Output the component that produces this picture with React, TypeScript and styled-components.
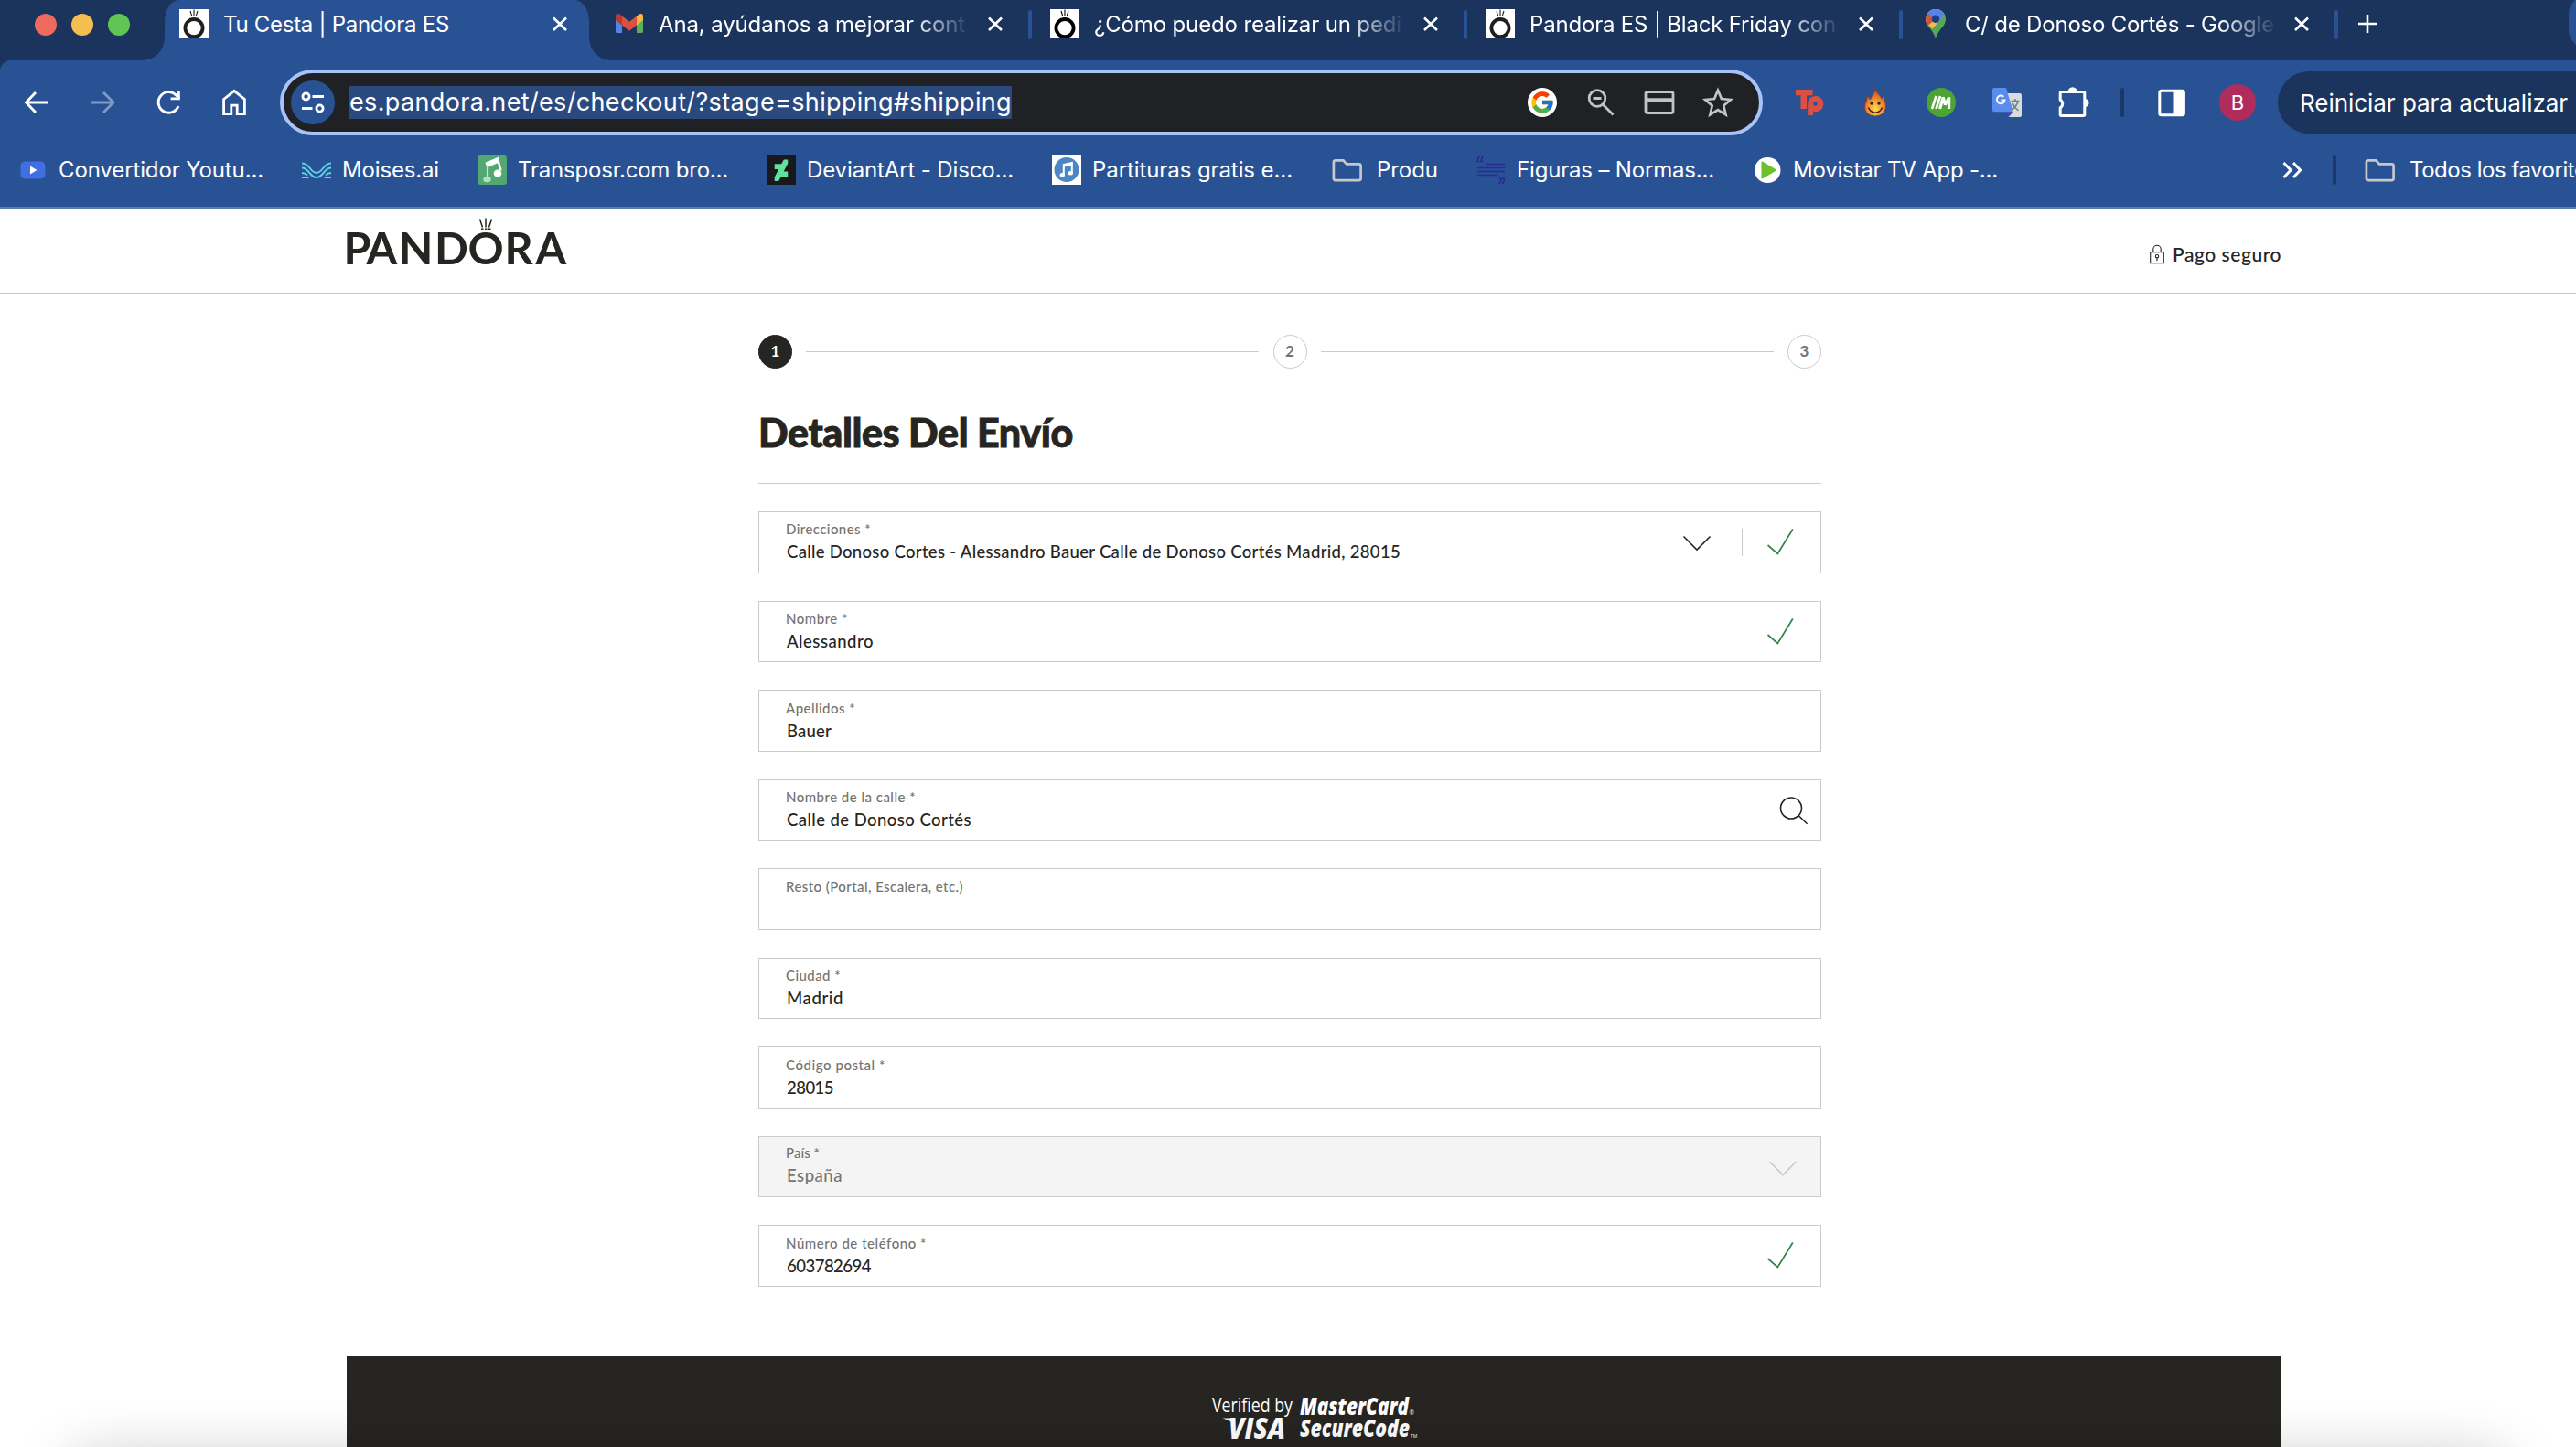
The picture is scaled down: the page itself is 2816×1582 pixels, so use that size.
import React, { useLayoutEffect, useRef, useState } from "react";
import styled, { createGlobalStyle } from "styled-components";
import { FcGoogle } from "react-icons/fc";

const color = {
  strip: "#1a345e",
  bar: "#295295",
  ink: "#262521",
  muted: "#74736f",
  line: "#cbcbcb",
  green: "#2f8547",
};

const ui = `Inter, "Liberation Sans", sans-serif`;
const brand = `Lato, "Open Sans", sans-serif`;

const GlobalStyle = createGlobalStyle`
  * { box-sizing: border-box; }
  html, body { margin: 0; padding: 0; background: #fff; }
  body { overflow: hidden; }
  svg { display: block; flex: none; overflow: visible; }
`;

/* ---------- text that keeps a fixed measure ---------- */

const Measure = styled.span<{ $w: number }>`
  display: block;
  flex: none;
  width: ${(p) => p.$w}px;
  white-space: pre;
`;

function Fit({ w, children }: { w: number; children: string }) {
  const ref = useRef<HTMLSpanElement>(null);
  const [spacing, setSpacing] = useState(0);
  useLayoutEffect(() => {
    const el = ref.current;
    if (!el) return;
    el.style.letterSpacing = "0px";
    const natural = el.getBoundingClientRect().width;
    const next = (w - natural) / children.length;
    el.style.letterSpacing = `${next}px`;
    setSpacing(next);
  }, [w, children]);
  return (
    <Measure $w={w}>
      <span ref={ref} style={{ letterSpacing: spacing }}>
        {children}
      </span>
    </Measure>
  );
}

/* ---------- browser chrome ---------- */

const Screen = styled.div`
  position: relative;
  width: 2816px;
  height: 1582px;
  overflow: hidden;
  background: #fff;
  display: flex;
  flex-direction: column;
`;

const TabStrip = styled.div`
  display: flex;
  flex: none;
  height: 66px;
  background: ${color.strip};
  color: #fff;
  font: 400 24px/54px ${ui};
  overflow: hidden;
`;

const Lights = styled.div`
  display: flex;
  flex: none;
  gap: 16px;
  width: 180px;
  padding: 15px 0 0 38px;
`;

const Light = styled.i<{ $c: string }>`
  width: 24px;
  height: 24px;
  border-radius: 50%;
  background: ${(p) => p.$c};
`;

const ActiveTab = styled.div`
  position: relative;
  display: flex;
  flex: none;
  width: 464px;
  height: 66px;
  padding-left: 16px;
  background: ${color.bar};
  border-radius: 16px 16px 0 0 / 24px 24px 0 0;
  &::before,
  &::after {
    content: "";
    position: absolute;
    bottom: 0;
    width: 24px;
    height: 24px;
  }
  &::before {
    left: -24px;
    background: radial-gradient(circle at 0 0, transparent 23.5px, ${color.bar} 24px);
  }
  &::after {
    right: -24px;
    background: radial-gradient(circle at 100% 0, transparent 23.5px, ${color.bar} 24px);
  }
`;

const InactiveTabs = styled.div`
  display: flex;
  flex: none;
  margin-left: 8px;
`;

const Tab = styled.div`
  display: flex;
  flex: none;
  width: 476px;
  padding-left: 20px;
`;

const Favicon = styled.span`
  flex: none;
  width: 32px;
  height: 32px;
  margin-top: 10px;
`;

const TabTitle = styled.div<{ $w: number; $fade?: boolean }>`
  flex: none;
  width: ${(p) => p.$w}px;
  margin-left: 16px;
  height: 54px;
  overflow: hidden;
  ${(p) => p.$fade && "mask-image: linear-gradient(to right, #000 82%, transparent 101%);"}
`;

const CloseSlot = styled.span<{ $ml: number }>`
  flex: none;
  margin: 18px 0 0 ${(p) => p.$ml}px;
`;

const TabRule = styled.i`
  width: 4px;
  height: 32px;
  margin: 11px 0 0 auto;
  border-radius: 2px;
  background: ${color.bar};
`;

const NewTab = styled.span`
  flex: none;
  margin: 16px 0 0 22px;
`;

const TabSearch = styled.span`
  flex: none;
  width: 56px;
  height: 60px;
  margin: -6px 0 0 210px;
  border-radius: 22px;
  background: ${color.bar};
`;

const ToolbarBacking = styled.div`
  flex: none;
  height: 94px;
  background: ${color.strip};
`;

const Toolbar = styled.div`
  display: flex;
  align-items: center;
  height: 94px;
  padding: 0 0 2px 24px;
  background: ${color.bar};
  border-top-left-radius: 12px;
  color: #fff;
`;

const IconRow = styled.div<{ $gap: number; $ml?: number }>`
  display: flex;
  flex: none;
  align-items: center;
  gap: ${(p) => p.$gap}px;
  margin-left: ${(p) => p.$ml ?? 0}px;
`;

const Omnibox = styled.div`
  display: flex;
  flex: none;
  align-items: center;
  width: 1621px;
  height: 72px;
  margin-left: 34px;
  padding: 0 29px 0 8px;
  border: 4px solid #a9c2f8;
  border-radius: 36px;
  background: #202124;
`;

const SiteInfo = styled.span`
  display: grid;
  place-items: center;
  width: 48px;
  height: 48px;
  border-radius: 50%;
  background: ${color.bar};
`;

const Url = styled.div`
  margin: 0 auto 0 16px;
  background: #2a497f;
  color: #fff;
  font: 400 27px/36px ${ui};
`;

const WhiteDisc = styled.span`
  display: grid;
  place-items: center;
  width: 32px;
  height: 32px;
  border-radius: 50%;
  background: #fff;
`;

const Rule = styled.i<{ $ml: number }>`
  flex: none;
  width: 4px;
  height: 32px;
  margin-left: ${(p) => p.$ml}px;
  border-radius: 2px;
  background: #1b3866;
`;

const Avatar = styled.span`
  flex: none;
  width: 40px;
  height: 40px;
  border-radius: 50%;
  background: #b02c5c;
  color: #fff;
  text-align: center;
  font: 400 22px/41px ${ui};
`;

const Relaunch = styled.div`
  flex: none;
  width: 420px;
  height: 68px;
  margin-left: 24px;
  padding-left: 24px;
  border-radius: 34px;
  background: ${color.strip};
  color: #fff;
  font: 400 26px/69px ${ui};
`;

const Bookmarks = styled.div`
  display: flex;
  flex: none;
  align-items: center;
  gap: 42px;
  height: 68px;
  padding: 0 0 14px 20px;
  border-bottom: 2px solid #5c7db3;
  background: ${color.bar};
  color: #fff;
  font: 400 24px/32px ${ui};
`;

const Bookmark = styled.div`
  display: flex;
  flex: none;
  align-items: center;
`;

const BookmarkIcon = styled.span<{ $wide?: boolean }>`
  flex: none;
  width: 32px;
  margin-right: ${(p) => (p.$wide ? 18 : 12)}px;
`;

const Overflow = styled.div`
  display: flex;
  flex: none;
  align-items: center;
  width: 321px;
  margin-left: auto;
`;

const AllBookmarks = styled.div`
  display: flex;
  margin-left: 30px;
`;

/* ---------- page ---------- */

const Header = styled.header`
  display: flex;
  flex: none;
  justify-content: space-between;
  height: 93px;
  padding: 0 322px 0 380px;
  border-bottom: 1px solid ${color.line};
`;

const Secure = styled.div`
  display: flex;
  gap: 9px;
  padding-top: 35px;
  height: 70px;
  color: ${color.ink};
  font: 500 21px/29px ${brand};
`;

const Main = styled.main`
  width: 1162px;
  height: 1161px;
  flex: none;
  margin-left: 829px;
  padding-top: 44px;
  color: ${color.ink};
`;

const Stepper = styled.div`
  display: flex;
  align-items: center;
  justify-content: space-between;
  height: 38px;
`;

const Step = styled.span<{ $on?: boolean }>`
  width: 37px;
  height: 37px;
  border: 1px solid ${(p) => (p.$on ? color.ink : color.line)};
  border-radius: 50%;
  background: ${(p) => (p.$on ? color.ink : "#fff")};
  color: ${(p) => (p.$on ? "#fff" : color.muted)};
  text-align: center;
  font: 700 17px/34px ${brand};
`;

const StepLine = styled.i`
  width: 495px;
  height: 1px;
  background: ${color.line};
`;

const Title = styled.h1`
  margin: 0;
  padding-top: 41px;
  height: 126px;
  font: 900 43px/58px ${brand};
  -webkit-text-stroke: 0.9px ${color.ink};
  border-bottom: 1px solid ${color.line};
`;

const Fields = styled.div`
  display: flex;
  flex-direction: column;
  gap: 30px;
  padding-top: 30px;
`;

const Box = styled.div<{ $disabled?: boolean }>`
  display: flex;
  justify-content: space-between;
  height: 67.5px;
  border: 1px solid ${color.line};
  background: ${(p) => (p.$disabled ? "#f4f4f4" : "#fff")};
  color: ${(p) => (p.$disabled ? color.muted : color.ink)};
`;

const Texts = styled.div<{ $up?: boolean }>`
  padding: ${(p) => (p.$up ? 8.5 : 9.5)}px 0 0 29px;
`;

const Label = styled.div`
  color: ${color.muted};
  font: 500 15px/19px ${brand};
`;

const Value = styled.div`
  padding: 3px 0 0 1px;
  font: 500 18.5px/25px ${brand};
`;

const Status = styled.div<{ $mr: number }>`
  display: flex;
  align-items: flex-start;
  padding-top: 18px;
  margin-right: ${(p) => p.$mr}px;
`;

const SelectDivider = styled.i`
  width: 1px;
  height: 30px;
  margin: 0 27px 0 34px;
  background: ${color.line};
`;

const Footer = styled.footer`
  flex: none;
  display: flex;
  justify-content: center;
  width: 2115px;
  height: 100px;
  margin-left: 379px;
  padding: 40px 0 0 0;
  background: ${color.ink};
`;

const DockShadow = styled.div`
  position: absolute;
  left: 70px;
  right: 70px;
  top: 1594px;
  height: 100px;
  border-radius: 40px;
  box-shadow: 0 0 64px rgba(0, 0, 0, 0.24);
`;

/* ---------- drawings ---------- */

const Icon = ({ children, w = 32, h = 32 }: { children: React.ReactNode; w?: number; h?: number }) => (
  <svg width={w} height={h} viewBox={`0 0 ${w} ${h}`} fill="none">
    {children}
  </svg>
);

const Cross = () => (
  <Icon w={16} h={16}>
    <path d="M1 1.5 15 15M15 1.5 1 15" stroke="#fff" strokeWidth="2.6" />
  </Icon>
);

const RingIcon = ({ ink = "#201f1c" }: { ink?: string }) => (
  <Icon>
    <path fill="#fff" d="M0 0h32v32H0z" />
    <circle cx="16" cy="20.6" r="9.6" stroke={ink} strokeWidth="3.8" />
    <path d="m12 2 1.7 5.4M16 .6V7.400M20 2l-1.700 5.400" stroke={ink} strokeWidth="1.1" />
  </Icon>
);

const GmailIcon = () => (
  <Icon>
    <path d="M1 8v16.500Q1 26 2.600 26H8V13z" fill="#4f86ec" />
    <path d="M31 8v16.500Q31 26 29.400 26H24V13z" fill="#5bb05c" />
    <path d="M24 7.500 27 5.300Q31 4 31 8v4l-7 5.500z" fill="#f3bd41" />
    <path d="M8 7.500 5 5.300Q1 4 1 8v4l7 5.500z" fill="#b93a2e" />
    <path d="m8 7.500 8 6.300 8-6.300v10l-8 6.200-8-6.200z" fill="#dc5040" />
  </Icon>
);

const MapsIcon = () => (
  <Icon>
    <path d="M16 0a11 11 0 0 1 11 11c0 8-8 10.500-11 21C13 21.500 5 19 5 11A11 11 0 0 1 16 0z" fill="#58a55c" />
    <path d="M7.500 4A11 11 0 0 1 25.800 6L12.500 21.500Q5 15 5 11.500z" fill="#f1bf42" />
    <path d="M7.500 4 16 11l-8.500 7Q2.800 11 7.500 4z" fill="#d85140" />
    <path d="M7.500 4A11 11 0 0 1 25.800 6L18 15l-6-5z" fill="#5383ec" />
    <circle cx="16" cy="10.800" r="4.300" fill="#1f3f80" />
  </Icon>
);

const Arrow = ({ flip }: { flip?: boolean }) => (
  <Icon>
    <path
      d={flip ? "M3 16h24M17 5l11 11-11 11" : "M29 16H5M15 5 4.500 16 15 27"}
      stroke={flip ? "#8299c3" : "#fff"}
      strokeWidth="2.8"
    />
  </Icon>
);

const ReloadIcon = () => (
  <Icon>
    <path d="M27 20a11.300 11.300 0 1 1-2.500-12L28 11.500" stroke="#fff" strokeWidth="2.9" />
    <path d="M28.800 3v10.200H18.600v-2.700h7.500V3z" fill="#fff" />
  </Icon>
);

const HomeIcon = () => (
  <Icon>
    <path d="M4.600 12.500 16 3.400l11.400 9.100v16.200h-8.200v-9.600h-6.400v9.600H4.600z" stroke="#fff" strokeWidth="2.8" />
  </Icon>
);

const TuneIcon = () => (
  <Icon w={28} h={24}>
    <g stroke="#fff" strokeWidth="2.800">
      <circle cx="6.500" cy="5.500" r="3.600" />
      <path d="M13.500 5.500H26M2 18.500h11.500" />
      <circle cx="21.500" cy="18.500" r="3.600" />
    </g>
  </Icon>
);

const ZoomOutIcon = () => (
  <Icon>
    <g stroke="#c2c3c5" strokeWidth="2.8">
      <circle cx="12" cy="11.500" r="8.800" />
      <path d="m18.500 18.500 11 11M7.500 11.500h9" />
    </g>
  </Icon>
);

const CardIcon = () => (
  <Icon>
    <rect x="1" y="4.500" width="30" height="23" rx="2" stroke="#c2c3c5" strokeWidth="2.800" />
    <path d="M1 13.500h30" stroke="#c2c3c5" strokeWidth="4.500" />
  </Icon>
);

const StarIcon = () => (
  <Icon>
    <path
      d="m16 2.800 3.900 9.300 10 .9-7.600 6.600 2.300 9.800L16 24.200l-8.600 5.200 2.300-9.800L2.100 13l10-.9z"
      stroke="#c2c3c5"
      strokeWidth="2.700"
    />
  </Icon>
);

const TpIcon = () => (
  <Icon>
    <path d="M1 2h18.500v6.200H13V23H6.500V8.200H1z" fill="#dc5043" />
    <path d="M14.200 17.500a8.600 8.600 0 1 1 6 8.200V30h-6z" fill="#dc5043" />
    <circle cx="22.500" cy="17.500" r="2.200" fill={color.bar} />
  </Icon>
);

const FlameIcon = () => (
  <Icon>
    <defs>
      <radialGradient id="flame" cx=".5" cy=".75" r=".7">
        <stop offset="0" stopColor="#fbdc4c" />
        <stop offset=".45" stopColor="#f09a36" />
        <stop offset="1" stopColor="#c9381c" />
      </radialGradient>
    </defs>
    <path
      d="M16 0c1 6 5 7 7 12l2.500-4c-.5 5 2.500 8 2 13C27 27 22 31 16 31S4.500 27 4.500 21c0-5 3-7 2.500-12 2 1 2.500 2 3.500 4C12 8 16 6 16 0z"
      fill="url(#flame)"
      stroke="#8a3a22"
      strokeWidth=".8"
    />
    <circle cx="12" cy="17" r="1.700" fill="#3a1d10" />
    <circle cx="20" cy="17" r="1.700" fill="#3a1d10" />
    <path d="M8.500 21.500c3 7.500 12 7.500 15 0" stroke="#3a1d10" strokeWidth="1.500" />
  </Icon>
);

const ImIcon = () => (
  <Icon>
    <circle cx="16" cy="16" r="16" fill="#4ca533" />
    <path d="m6 23 4.500-14M10.500 23 15 9" stroke="#fff" strokeWidth="2.600" />
    <path d="m14.600 23 3.600-12.500 2.200 8 4.300-8L24.500 23" stroke="#fff" strokeWidth="3.200" strokeLinejoin="bevel" />
  </Icon>
);

const TranslateIcon = () => (
  <Icon>
    <path d="M12 6h18q2 0 2 2v22q0 2-2 2H18z" fill="#dadcdc" />
    <path d="M16 26h7l-5.200 6z" fill="#4a43b5" />
    <path d="M2 0h13l7.800 26.200H2q-2 0-2-2V2q0-2 2-2z" fill="#5a8cf0" />
    <path d="M20.500 14.500h9M25 12v2.500M28 14.500c-1 5-4 7.500-6.500 9.500M22 17c1.500 3.500 4 6 6.500 8" stroke="#6b8388" strokeWidth="1.600" />
    <path d="M12.300 9.800a4.300 4.300 0 1 0 1.200 3.700H9.500" stroke="#fff" strokeWidth="2" />
  </Icon>
);

const PuzzleIcon = () => (
  <Icon>
    <path
      d="M3.400 4.500h24.200q1.200 0 1.200 1.200v23.600q0 1.200-1.200 1.200H3.400q-1.200 0-1.200-1.200v-7.400a5.100 5.100 0 0 0 0-8.800V5.700q0-1.200 1.200-1.200z"
      stroke="#fff"
      strokeWidth="3"
    />
    <path d="M10.500 4.500a5.200 5.200 0 0 1 10.400 0zM29 12a4.600 4.600 0 0 1 0 9.200z" fill="#fff" />
  </Icon>
);

const PanelIcon = () => (
  <Icon>
    <rect x="2.800" y="3.300" width="26.600" height="26.400" rx="2" stroke="#fff" strokeWidth="3" />
    <path d="M18.500 3.300h10v26.400h-10z" fill="#fff" />
  </Icon>
);

const PlayTile = () => (
  <Icon>
    <rect x="2.500" y="6.500" width="27" height="19" rx="5" fill="#416fe3" />
    <path d="m13 11.500 7.500 4.500-7.500 4.500z" fill="#fff" />
  </Icon>
);

const WavesIcon = () => (
  <Icon>
    <g stroke="#5dd3e6" strokeWidth="2">
      <path d="M0 8.500c9 0 9 10.500 16 10.500s7-10.500 16-10.500" />
      <path d="M0 13.500c8 0 8.500 10.500 16 10.500s8-10.500 16-10.500" />
      <path d="M0 19c3 0 4.500 1 6 2.500M32 19c-3 0-4.500 1-6 2.500M0 24h7.500M32 24h-7.500" />
    </g>
  </Icon>
);

const NoteTile = () => (
  <Icon>
    <rect width="32" height="32" rx="3" fill="#52a871" />
    <path d="M9 9 22 3.500l3.500 13" stroke="#fff" strokeWidth="2.500" />
    <path d="m8.500 8.500 13-5.500 1 5-11.500 5z" fill="#fff" />
    <ellipse cx="22" cy="19.500" rx="4.300" ry="4" fill="#fff" />
    <path d="M11 12v13" stroke="#c5e3cf" strokeWidth="2.200" />
    <ellipse cx="10.500" cy="26" rx="4.200" ry="3.200" fill="#b9dcc5" />
  </Icon>
);

const DeviantTile = () => (
  <Icon>
    <path fill="#17191d" d="M0 0h32v32H0z" />
    <path
      transform="translate(4.200 4.500) scale(.98)"
      fill="#5fe39b"
      d="M19.207 4.794l.23-.43V0H15.070l-.436.44-2.058 3.925-.646.436H4.580v5.993h4.040l.36.436-4.175 7.980-.24.430V24H8.930l.436-.44 2.070-3.925.644-.436h7.350v-5.993h-4.050l-.36-.438 4.186-7.977z"
    />
  </Icon>
);

const SheetMusicTile = () => (
  <Icon>
    <path fill="#fff" d="M0 0h32v32H0z" />
    <circle cx="16" cy="15.500" r="13.500" fill="#4b86c6" />
    <path d="M12.800 21V10l9-2v11" stroke="#fff" strokeWidth="2" />
    <path d="m12 9.500 10.500-2.300v3.300L12 12.800z" fill="#fff" />
    <ellipse cx="11.300" cy="21.300" rx="2.700" ry="2.200" fill="#fff" />
    <ellipse cx="20.300" cy="19.300" rx="2.700" ry="2.200" fill="#fff" />
  </Icon>
);

const FolderIcon = () => (
  <Icon w={34}>
    <path
      d="M5 5.400h8.500l3.500 4h13.500q2.100 0 2.100 2.100v13.600q0 2.100-2.100 2.100H5q-2.100 0-2.100-2.100V7.500q0-2.100 2.100-2.100z"
      stroke="#c6c8cb"
      strokeWidth="2.700"
    />
  </Icon>
);

const QuoteIcon = () => (
  <Icon>
    <g stroke="#2b2a92" strokeWidth="1.700">
      <path d="M10 9.500h21.500M1 13.500h30M1 17.500h30M1 21.500h22" />
      <path d="M3.500 1Q1 3 1 6.500h2.500M7.500 1Q5 3 5 6.500h2.500M28 31q2.500-2 2.500-6H28M24.500 31q2.500-2 2.500-6h-2.500" />
    </g>
  </Icon>
);

const PlayDisc = () => (
  <Icon>
    <rect x="2" y="2" width="28.500" height="28" rx="14" fill="#fff" />
    <path d="M9.500 7.500q0-1.500 1.500-.8L25 15q1 1 0 2L11 25.300q-1.500.7-1.500-.8z" fill="#6cc02f" />
  </Icon>
);

const LockIcon = () => (
  <Icon w={16} h={30}>
    <g stroke={color.ink} strokeWidth="1.100" transform="translate(0 4.500)">
      <path d="M.7 8.300h14.600v12H.7zM3.800 8.300V5a4.200 4.200 0 0 1 8.400 0v3.300" />
      <circle cx="8" cy="12.700" r="1.700" />
      <path d="M8 14.400v3.300" />
    </g>
  </Icon>
);

const CheckIcon = () => (
  <Icon w={28} h={29}>
    <path d="M.5 18 11.300 27.500 27.800 0.500" stroke={color.green} strokeWidth="1.700" />
  </Icon>
);

const ChevronIcon = ({ tone, top }: { tone: string; top: number }) => (
  <Icon w={30} h={30}>
    <path d={`M.5 ${top}l14.500 14.500L29.500 ${top}`} stroke={tone} strokeWidth="1.600" />
  </Icon>
);

const SearchIcon = () => (
  <Icon w={30} h={31}>
    <circle cx="12" cy="12.500" r="11.500" stroke={color.ink} strokeWidth="1.600" />
    <path d="m20.300 20.800 9.300 9" stroke={color.ink} strokeWidth="1.600" />
  </Icon>
);

const Wordmark = () => (
  <svg width="242" height="70" viewBox="0 0 242 70" fill="none">
    <text
      x="-4.500 20.500 56 95 131.500 171.500 205.500"
      y="60.500"
      fontFamily="Lato"
      fontWeight="700"
      fontSize="48.500"
      fill={color.ink}
    >
      PANDORA
    </text>
    <path d="m144.500 11.500 3 9M151 10.500v10M157.500 11.500l-3 9" stroke={color.ink} strokeWidth="1.500" />
    <path d="M146 22.300h2.500M150 22.300h2.500M154 22.300h2.500" stroke={color.ink} strokeWidth="1.800" />
  </svg>
);

const CardSchemes = () => (
  <svg width="226" height="60" viewBox="0 0 226 60" fill="#fff" fontFamily="Open Sans">
    <text x="1" y="22" fontSize="21" textLength="88" lengthAdjust="spacingAndGlyphs">
      Verified by
    </text>
    <text x="19" y="50.500" fontSize="31" fontWeight="800" fontStyle="italic" textLength="62" lengthAdjust="spacingAndGlyphs">
      VISA
    </text>
    <path d="M12.500 28.500h10.500l3 8q-4-5.500-13.500-8z" />
    <text x="97" y="25" fontSize="26.500" fontWeight="800" fontStyle="italic" textLength="119" lengthAdjust="spacingAndGlyphs">
      MasterCard
    </text>
    <text x="97" y="49.300" fontSize="26.500" fontWeight="800" fontStyle="italic" textLength="120" lengthAdjust="spacingAndGlyphs">
      SecureCode
    </text>
    <text x="216.500" y="25" fontSize="6.500">®</text>
    <text x="218" y="49.500" fontSize="5">TM</text>
  </svg>
);

/* ---------- data ---------- */

const tabs = [
  { icon: <GmailIcon />, title: "Ana, ayúdanos a mejorar cont", w: 335 },
  { icon: <RingIcon ink="#000" />, title: "¿Cómo puedo realizar un pedi", w: 336 },
  { icon: <RingIcon />, title: "Pandora ES | Black Friday con", w: 335 },
  { icon: <MapsIcon />, title: "C/ de Donoso Cortés - Google", w: 338 },
];

const bookmarks = [
  { icon: <PlayTile />, text: "Convertidor Youtu...", w: 224 },
  { icon: <WavesIcon />, text: "Moises.ai", w: 106 },
  { icon: <NoteTile />, text: "Transposr.com bro...", w: 230 },
  { icon: <DeviantTile />, text: "DeviantArt - Disco...", w: 226 },
  { icon: <SheetMusicTile />, text: "Partituras gratis e...", w: 219 },
  { icon: <FolderIcon />, text: "Produ", w: 67, wide: true },
  { icon: <QuoteIcon />, text: "Figuras – Normas...", w: 216 },
  { icon: <PlayDisc />, text: "Movistar TV App -...", w: 224 },
];

type Mark = "select" | "check" | "search" | "locked";
const fields: { label: string; lw: number; value?: string; vw?: number; mark?: Mark }[] = [
  {
    label: "Direcciones *",
    lw: 93,
    value: "Calle Donoso Cortes - Alessandro Bauer Calle de Donoso Cortés Madrid, 28015",
    vw: 671,
    mark: "select",
  },
  { label: "Nombre *", lw: 68, value: "Alessandro", vw: 95, mark: "check" },
  { label: "Apellidos *", lw: 76, value: "Bauer", vw: 49 },
  { label: "Nombre de la calle *", lw: 142, value: "Calle de Donoso Cortés", vw: 202, mark: "search" },
  { label: "Resto (Portal, Escalera, etc.)", lw: 194 },
  { label: "Ciudad *", lw: 60, value: "Madrid", vw: 62 },
  { label: "Código postal *", lw: 109, value: "28015", vw: 51 },
  { label: "País *", lw: 37, value: "España", vw: 61, mark: "locked" },
  { label: "Número de teléfono *", lw: 154, value: "603782694", vw: 92, mark: "check" },
];

function FieldMark({ mark }: { mark?: Mark }) {
  if (mark === "select")
    return (
      <Status $mr={30}>
        <ChevronIcon tone={color.ink} top={8.5} />
        <SelectDivider />
        <CheckIcon />
      </Status>
    );
  if (mark === "check")
    return (
      <Status $mr={30}>
        <CheckIcon />
      </Status>
    );
  if (mark === "search")
    return (
      <Status $mr={14}>
        <SearchIcon />
      </Status>
    );
  if (mark === "locked")
    return (
      <Status $mr={26}>
        <ChevronIcon tone="#c9c9c9" top={9} />
      </Status>
    );
  return null;
}

export default function App() {
  return (
    <Screen>
      <GlobalStyle />
      <TabStrip>
        <Lights>
          <Light $c="#ed6a5e" />
          <Light $c="#f4bf4f" />
          <Light $c="#61c554" />
        </Lights>
        <ActiveTab>
          <Favicon>
            <RingIcon />
          </Favicon>
          <TabTitle $w={340}>
            <Fit w={247}>Tu Cesta | Pandora ES</Fit>
          </TabTitle>
          <CloseSlot $ml={20}>
            <Cross />
          </CloseSlot>
        </ActiveTab>
        <InactiveTabs>
          {tabs.map((t) => (
            <Tab key={t.title}>
              <Favicon>{t.icon}</Favicon>
              <TabTitle $w={338} $fade>
                <Fit w={t.w}>{t.title}</Fit>
              </TabTitle>
              <CloseSlot $ml={22}>
                <Cross />
              </CloseSlot>
              <TabRule />
            </Tab>
          ))}
        </InactiveTabs>
        <NewTab>
          <Icon w={20} h={20}>
            <path d="M10 0v20M0 10h20" stroke="#fff" strokeWidth="2.600" />
          </Icon>
        </NewTab>
        <TabSearch />
      </TabStrip>
      <ToolbarBacking>
        <Toolbar>
          <IconRow $gap={40}>
            <Arrow />
            <Arrow flip />
            <ReloadIcon />
            <HomeIcon />
          </IconRow>
          <Omnibox>
            <SiteInfo>
              <TuneIcon />
            </SiteInfo>
            <Url>
              <Fit w={724}>es.pandora.net/es/checkout/?stage=shipping#shipping</Fit>
            </Url>
            <IconRow $gap={32}>
              <WhiteDisc>
                <FcGoogle size={28} />
              </WhiteDisc>
              <ZoomOutIcon />
              <CardIcon />
              <StarIcon />
            </IconRow>
          </Omnibox>
          <IconRow $gap={40} $ml={35}>
            <TpIcon />
            <FlameIcon />
            <ImIcon />
            <TranslateIcon />
            <PuzzleIcon />
          </IconRow>
          <Rule $ml={36} />
          <IconRow $gap={36} $ml={36}>
            <PanelIcon />
            <Avatar>B</Avatar>
          </IconRow>
          <Relaunch>
            <Fit w={293}>Reiniciar para actualizar</Fit>
          </Relaunch>
        </Toolbar>
      </ToolbarBacking>
      <Bookmarks>
        {bookmarks.map((b) => (
          <Bookmark key={b.text}>
            <BookmarkIcon $wide={b.wide}>{b.icon}</BookmarkIcon>
            <Fit w={b.w}>{b.text}</Fit>
          </Bookmark>
        ))}
        <Overflow>
          <Icon w={22} h={18}>
            <path d="m1.500 1 7.700 8-7.700 8M12 1l7.700 8L12 17" stroke="#fff" strokeWidth="2.900" />
          </Icon>
          <Rule $ml={33} />
          <AllBookmarks>
            <BookmarkIcon $wide>
              <FolderIcon />
            </BookmarkIcon>
            <Fit w={206}>Todos los favoritos</Fit>
          </AllBookmarks>
        </Overflow>
      </Bookmarks>

      <Header>
        <Wordmark />
        <Secure>
          <LockIcon />
          <Fit w={119}>Pago seguro</Fit>
        </Secure>
      </Header>

      <Main>
        <Stepper>
          <Step $on>1</Step>
          <StepLine />
          <Step>2</Step>
          <StepLine />
          <Step>3</Step>
        </Stepper>
        <Title>
          <Fit w={344}>Detalles Del Envío</Fit>
        </Title>
        <Fields>
          {fields.map((f) => (
            <Box key={f.label} $disabled={f.mark === "locked"}>
              <Texts $up={f.mark === "locked" || f.mark === "select"}>
                <Label>
                  <Fit w={f.lw}>{f.label}</Fit>
                </Label>
                {f.value && (
                  <Value>
                    <Fit w={f.vw ?? 0}>{f.value}</Fit>
                  </Value>
                )}
              </Texts>
              <FieldMark mark={f.mark} />
            </Box>
          ))}
        </Fields>
      </Main>

      <Footer>
        <CardSchemes />
      </Footer>
      <DockShadow />
    </Screen>
  );
}
